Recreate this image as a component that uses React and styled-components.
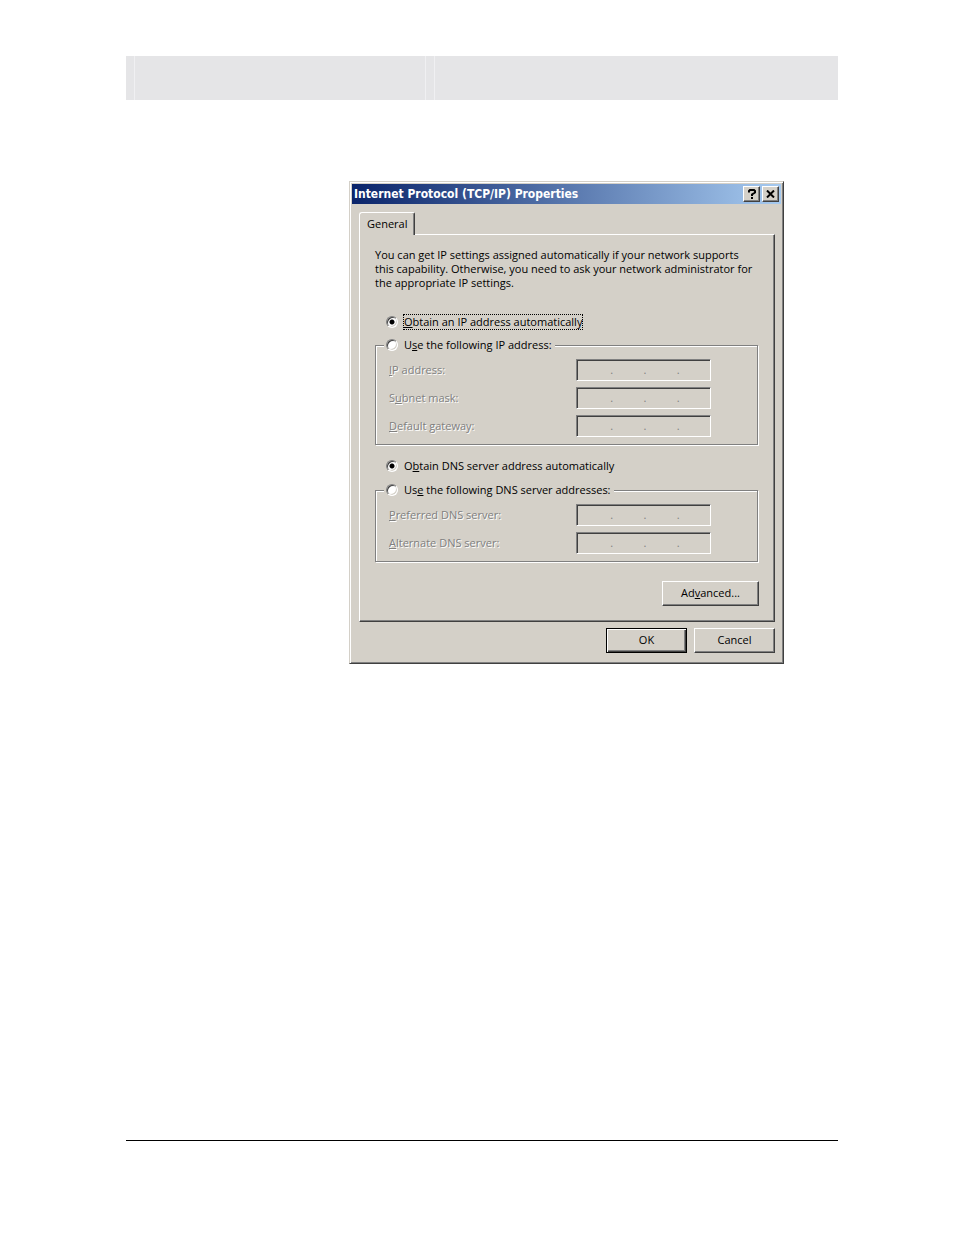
import React, { useState } from 'react';
import styled, { createGlobalStyle, css } from 'styled-components';

const face = '#d4d0c8';

const GlobalStyle = createGlobalStyle`
  *, *::before, *::after {
    box-sizing: border-box;
  }

  body {
    margin: 0;
    background: #fff;
    color: #000;
    font-family: "Open Sans", "Liberation Sans", sans-serif;
    font-size: 11px;
    line-height: 14px;
  }
`;

const Page = styled.div`
  min-height: 100vh;
  padding: 56px 116px 94px 126px;
  display: flex;
  flex-direction: column;
`;

const HeaderBand = styled.header`
  display: grid;
  grid-template-columns: 9px 291px 9px 1fr;
  height: 44px;
  background: #e5e5e7;
`;

const HeaderCell = styled.div`
  border-right: 1px solid #f0f0f2;

  &:last-child {
    border-right: none;
  }
`;

const FooterRule = styled.hr`
  width: 100%;
  margin: auto 0 0;
  border: none;
  border-top: 1px solid #000;
`;

const Dialog = styled.section`
  margin: 81px 54px 40px 223px;
  padding: 2px;
  background: ${face};
  border: 1px solid;
  border-color: ${face} #404040 #404040 ${face};
  box-shadow: inset 1px 1px 0 #fff, inset -1px -1px 0 #808080;
`;

const TitleBar = styled.div`
  display: flex;
  align-items: center;
  gap: 2px;
  height: 20px;
  padding: 0 2px;
  background: linear-gradient(to right, #0a246a, #a6caf0);
`;

const Title = styled.h1`
  flex: 1;
  margin: 0;
  color: #fff;
  font-family: "DejaVu Sans Condensed", Tahoma, sans-serif;
  font-size: 12px;
  font-weight: bold;
  white-space: nowrap;
`;

const raised = css`
  background: ${face};
  border: 1px solid;
  border-color: #fff #404040 #404040 #fff;
  box-shadow: inset -1px -1px 0 #808080;
`;

const CaptionButton = styled.button`
  ${raised}
  display: flex;
  align-items: center;
  justify-content: center;
  width: 17px;
  height: 16px;
  padding: 0;
`;

const Body = styled.form`
  padding: 8px 6px 8px 7px;
`;

const Tab = styled.button`
  position: relative;
  display: block;
  height: 23px;
  margin-bottom: -1px;
  padding: 0 7px 1px;
  background: ${face};
  border: 1px solid;
  border-color: #fff #404040 transparent #fff;
  border-bottom: none;
  border-radius: 3px 2px 0 0;
  box-shadow: inset -1px 0 0 #808080;
  font: inherit;
`;

const Panel = styled.div`
  padding: 13px 15px 15px;
  border: 1px solid;
  border-color: #fff #404040 #404040 #fff;
  box-shadow: inset -1px -1px 0 #808080;
`;

const Intro = styled.p`
  margin: 0 0 24px;
`;

const Option = styled.div`
  display: flex;
  align-items: center;
  gap: 5px;
  height: 16px;
  padding-left: 11px;
`;

const Radio = styled.input`
  appearance: none;
  flex: none;
  width: 12px;
  height: 12px;
  margin: 0;
  background: #fff;
  border: 1px solid;
  border-color: #808080 #fff #fff #808080;
  border-radius: 50%;
  box-shadow: inset 1px 1px 0 #404040, inset -1px -1px 0 ${face};
  outline: none;

  &:checked {
    background: radial-gradient(circle, #000 0 2px, #fff 3px);
  }
`;

const OptionLabel = styled.label`
  height: 16px;
  border: 1px ${(props) => (props.$focused ? 'dotted #000' : 'solid transparent')};
  white-space: nowrap;
`;

const Group = styled.fieldset`
  min-width: 0;
  margin: ${(props) => props.$top}px 1px 0 0;
  padding: 6px 0 7px;
  border: 1px solid #808080;
  box-shadow: 1px 1px 0 #fff, inset 1px 1px 0 #fff;

  & + ${Option} {
    margin-top: 13px;
  }
`;

const Legend = styled.legend`
  margin-left: 8px;
  padding: 0 2px 0 0;
  background: ${face};

  ${Option} {
    padding-left: 2px;
  }
`;

const Fields = styled.div`
  display: flex;
  flex-direction: column;
  gap: 6px;
`;

const Field = styled.div`
  display: flex;
  align-items: center;
  padding-left: 13px;
`;

const FieldLabel = styled.label`
  width: 187px;
  color: #808080;
  text-shadow: 1px 1px 0 #fff;
`;

const AddressBox = styled.div`
  display: flex;
  align-items: center;
  width: 135px;
  height: 22px;
  padding-left: 3px;
  background: ${face};
  border: 1px solid;
  border-color: #808080 #fff #fff #808080;
  box-shadow: inset 1px 1px 0 #404040;
  color: #808080;
`;

const Octet = styled.input`
  flex: 1;
  min-width: 0;
  height: 16px;
  padding: 0;
  background: transparent;
  border: none;
  font: inherit;
  text-align: center;
`;

const PushButton = styled.button`
  ${raised}
  width: ${(props) => (props.$wide ? 97 : 81)}px;
  height: 25px;
  padding: 0 0 1px;
  font: inherit;
  color: #000;

  ${(props) =>
    props.$primary &&
    css`
      border-color: #000;
      box-shadow: inset 1px 1px 0 #fff, inset -1px -1px 0 #404040,
        inset -2px -2px 0 #808080;
    `}
`;

const ButtonRow = styled.div`
  display: flex;
  justify-content: flex-end;
  gap: 7px;
  margin-top: ${(props) => props.$top}px;
`;

// Underlines the access key of a label
const Key = styled.u`
  text-decoration: underline;
  text-decoration-thickness: 1px;
  text-underline-offset: 1px;
`;

const AddressField = ({ id, name, children }) => (
  <Field>
    <FieldLabel htmlFor={id}>{children}</FieldLabel>
    <AddressBox>
      <Octet id={id} disabled />.
      <Octet aria-label={`${name}, part 2`} disabled />.
      <Octet aria-label={`${name}, part 3`} disabled />.
      <Octet aria-label={`${name}, part 4`} disabled />
    </AddressBox>
  </Field>
);

const App = () => {
  const [ip, setIp] = useState('auto');
  const [dns, setDns] = useState('auto');

  return (
    <Page>
      <GlobalStyle />
      <HeaderBand>
        <HeaderCell />
        <HeaderCell />
        <HeaderCell />
        <HeaderCell />
      </HeaderBand>

      <Dialog>
        <TitleBar>
          <Title>Internet Protocol (TCP/IP) Properties</Title>
          <CaptionButton type="button" aria-label="Help">
            <svg width="8" height="10" viewBox="0 0 8 10" fill="none" stroke="#000" strokeWidth="2">
              <path d="M1 3.500V2L2 1H6L7 2V3.500L4 5.500V7M3 9H5" />
            </svg>
          </CaptionButton>
          <CaptionButton type="button" aria-label="Close">
            <svg width="9" height="8" viewBox="0 0 9 8" stroke="#000" strokeWidth="2">
              <path d="M1 0.500L8 7.500M8 0.500L1 7.500" />
            </svg>
          </CaptionButton>
        </TitleBar>

        <Body onSubmit={(event) => event.preventDefault()}>
          <Tab type="button">General</Tab>
          <Panel>
            <Intro>
              You can get IP settings assigned automatically if your network supports
              <br />
              this capability. Otherwise, you need to ask your network administrator for
              <br />
              the appropriate IP settings.
            </Intro>

            <Option>
              <Radio type="radio" name="ip" id="ip-auto" checked={ip === 'auto'} onChange={() => setIp('auto')} />
              <OptionLabel htmlFor="ip-auto" $focused>
                <Key>O</Key>btain an IP address automatically
              </OptionLabel>
            </Option>
            <Group $top={7}>
              <Legend>
                <Option>
                  <Radio type="radio" name="ip" id="ip-manual" checked={ip === 'manual'} onChange={() => setIp('manual')} />
                  <OptionLabel htmlFor="ip-manual">
                    U<Key>s</Key>e the following IP address:
                  </OptionLabel>
                </Option>
              </Legend>
              <Fields>
                <AddressField id="address" name="IP address">
                  <Key>I</Key>P address:
                </AddressField>
                <AddressField id="mask" name="Subnet mask">
                  S<Key>u</Key>bnet mask:
                </AddressField>
                <AddressField id="gateway" name="Default gateway">
                  <Key>D</Key>efault gateway:
                </AddressField>
              </Fields>
            </Group>

            <Option>
              <Radio type="radio" name="dns" id="dns-auto" checked={dns === 'auto'} onChange={() => setDns('auto')} />
              <OptionLabel htmlFor="dns-auto">
                O<Key>b</Key>tain DNS server address automatically
              </OptionLabel>
            </Option>
            <Group $top={8}>
              <Legend>
                <Option>
                  <Radio type="radio" name="dns" id="dns-manual" checked={dns === 'manual'} onChange={() => setDns('manual')} />
                  <OptionLabel htmlFor="dns-manual">
                    Us<Key>e</Key> the following DNS server addresses:
                  </OptionLabel>
                </Option>
              </Legend>
              <Fields>
                <AddressField id="preferred" name="Preferred DNS server">
                  <Key>P</Key>referred DNS server:
                </AddressField>
                <AddressField id="alternate" name="Alternate DNS server">
                  <Key>A</Key>lternate DNS server:
                </AddressField>
              </Fields>
            </Group>

            <ButtonRow $top={19}>
              <PushButton type="button" $wide>
                Ad<Key>v</Key>anced...
              </PushButton>
            </ButtonRow>
          </Panel>

          <ButtonRow $top={6}>
            <PushButton type="submit" $primary>OK</PushButton>
            <PushButton type="button">Cancel</PushButton>
          </ButtonRow>
        </Body>
      </Dialog>

      <FooterRule />
    </Page>
  );
};

export default App;
